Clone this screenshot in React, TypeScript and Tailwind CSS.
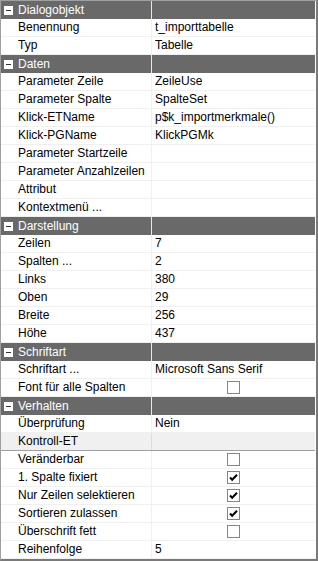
type Item =
  | { kind: "head"; label: string }
  | { kind: "row"; label: string; value?: string; check?: boolean; special?: boolean };

const items: Item[] = [
  { kind: "head", label: "Dialogobjekt" },
  { kind: "row", label: "Benennung", value: "t_importtabelle" },
  { kind: "row", label: "Typ", value: "Tabelle" },
  { kind: "head", label: "Daten" },
  { kind: "row", label: "Parameter Zeile", value: "ZeileUse" },
  { kind: "row", label: "Parameter Spalte", value: "SpalteSet" },
  { kind: "row", label: "Klick-ETName", value: "p$k_importmerkmale()" },
  { kind: "row", label: "Klick-PGName", value: "KlickPGMk" },
  { kind: "row", label: "Parameter Startzeile" },
  { kind: "row", label: "Parameter Anzahlzeilen" },
  { kind: "row", label: "Attribut" },
  { kind: "row", label: "Kontextmenü ..." },
  { kind: "head", label: "Darstellung" },
  { kind: "row", label: "Zeilen", value: "7" },
  { kind: "row", label: "Spalten ...", value: "2" },
  { kind: "row", label: "Links", value: "380" },
  { kind: "row", label: "Oben", value: "29" },
  { kind: "row", label: "Breite", value: "256" },
  { kind: "row", label: "Höhe", value: "437" },
  { kind: "head", label: "Schriftart" },
  { kind: "row", label: "Schriftart ...", value: "Microsoft Sans Serif" },
  { kind: "row", label: "Font für alle Spalten", check: false },
  { kind: "head", label: "Verhalten" },
  { kind: "row", label: "Überprüfung", value: "Nein" },
  { kind: "row", label: "Kontroll-ET", special: true },
  { kind: "row", label: "Veränderbar", check: false },
  { kind: "row", label: "1. Spalte fixiert", check: true },
  { kind: "row", label: "Nur Zeilen selektieren", check: true },
  { kind: "row", label: "Sortieren zulassen", check: true },
  { kind: "row", label: "Überschrift fett", check: false },
  { kind: "row", label: "Reihenfolge", value: "5" },
];

function CheckBox({ on }: { on: boolean }) {
  return (
    <span className="flex h-[13px] w-[13px] items-center justify-center border border-[#858585] bg-white">
      {on && (
        <svg width="9" height="9" viewBox="0 0 9 9">
          <path d="M1 4.5 L3.2 6.8 L8 1.8" fill="none" stroke="#000" strokeWidth="2" />
        </svg>
      )}
    </span>
  );
}

function Minus() {
  return (
    <span className="flex h-[9px] w-[9px] items-center justify-center bg-white">
      <span className="h-[1px] w-[5px] bg-[#333]" />
    </span>
  );
}

export default function App() {
  return (
    <div
      className="w-[318px] h-[561px] overflow-hidden border-l border-t border-[#a0a0a0] border-r-2 border-b-2 border-r-[#7a7a7a] border-b-[#7a7a7a] bg-white pr-[1px] text-[12px] text-black"
      style={{ fontFamily: '"Liberation Sans", Arial, sans-serif' }}
    >
      {items.map((it, i) =>
        it.kind === "head" ? (
          <div key={i} className="flex h-[18px] bg-[#696969] text-white leading-[18px]">
            <div className="flex w-[150px] items-center gap-[5px] pl-[3px]">
              <Minus />
              <span>{it.label}</span>
            </div>
            <div className="w-[1px] bg-[#e8e8e8]" />
            <div className="flex-1" />
          </div>
        ) : (
          <div
            key={i}
            className={
              it.special
                ? "flex h-[18px] border-b border-[#a0a0a0] bg-[#f0f0f0] leading-[17px]"
                : "flex h-[18px] border-b border-[#f0f0f0] leading-[17px]"
            }
          >
            <div className="w-[150px] pl-[17px] whitespace-nowrap overflow-hidden">{it.label}</div>
            <div className={it.special ? "w-[1px] bg-[#dcdcdc]" : "w-[1px] bg-[#f0f0f0]"} />
            <div className="flex flex-1 items-center pl-[3px] whitespace-nowrap overflow-hidden">
              {it.check !== undefined ? (
                <div className="flex flex-1 justify-center pr-[3px]">
                  <CheckBox on={it.check} />
                </div>
              ) : (
                it.value
              )}
            </div>
          </div>
        )
      )}
    </div>
  );
}
